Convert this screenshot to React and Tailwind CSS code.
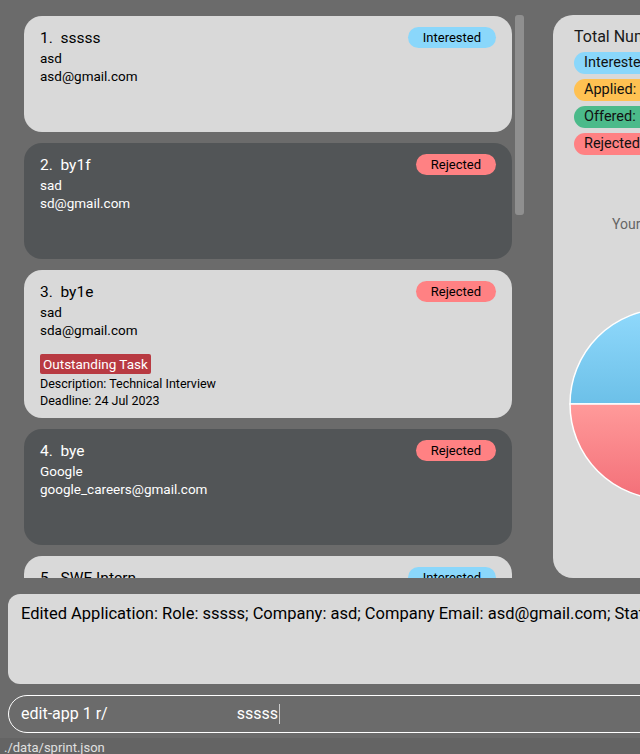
import React from "react";

const apps = [
  { id: 1, role: "sssss", company: "asd", email: "asd@gmail.com", status: "Interested", light: true },
  { id: 2, role: "by1f", company: "sad", email: "sd@gmail.com", status: "Rejected", light: false },
  {
    id: 3,
    role: "by1e",
    company: "sad",
    email: "sda@gmail.com",
    status: "Rejected",
    light: true,
    task: { desc: "Technical Interview", deadline: "24 Jul 2023" },
  },
  { id: 4, role: "bye", company: "Google", email: "google_careers@gmail.com", status: "Rejected", light: false },
  { id: 5, role: "SWE Intern", company: "", email: "", status: "Interested", light: true },
];

const badgeColor = {
  Interested: "bg-[#8ad7fb]",
  Applied: "bg-[#ffc152]",
  Offered: "bg-[#4bba8a]",
  Rejected: "bg-[#ff8183]",
};

function AppCard({ app }) {
  const text = app.light ? "text-black" : "text-white";
  return (
    <div
      className={`shrink-0 rounded-[18px] pl-4 pr-4 pt-[12px] ${
        app.light ? "bg-[#d9d9d9]" : "bg-[#525557]"
      } ${app.task ? "h-[148px]" : "h-[116px]"} ${text}`}
    >
      <div className="flex items-start justify-between">
        <div className="text-[15.5px] leading-[19px] pt-[1px]">
          {app.id}.&nbsp; {app.role}
        </div>
        <span
          className={`${badgeColor[app.status]} text-black text-[13px] leading-[21px] h-[21px] rounded-full px-[15px] mt-[-1px]`}
        >
          {app.status}
        </span>
      </div>
      <div className="text-[13.5px] leading-[18px] mt-[1px]">{app.company}</div>
      <div className="text-[13.5px] leading-[18px]">{app.email}</div>
      {app.task && (
        <div className="mt-[15px] text-[12.5px] leading-[17px]">
          <span className="inline-block bg-[#b83a42] text-white text-[13.5px] leading-[20px] px-[3px] rounded-[2px]">
            Outstanding Task
          </span>
          <div className="mt-[1px]">Description: {app.task.desc}</div>
          <div>Deadline: {app.task.deadline}</div>
        </div>
      )}
    </div>
  );
}

function StatsPanel() {
  const statuses = ["Interested", "Applied", "Offered", "Rejected"];
  return (
    <div className="ml-[29px] w-[300px] h-[563px] shrink-0 bg-[#d9d9d9] rounded-[20px] pt-[12px] pl-[21px] overflow-hidden">
      <div className="text-[16px] leading-[20px] text-[#1a1a1a] whitespace-nowrap">
        Total Number of Applications
      </div>
      <div className="flex flex-col gap-[5px] mt-[5px]">
        {statuses.map((s) => (
          <span
            key={s}
            className={`${badgeColor[s]} self-start rounded-full h-[22px] leading-[22px] text-[14.5px] text-[#111] px-[10px] whitespace-nowrap`}
          >
            {s}: 1
          </span>
        ))}
      </div>
      <div className="mt-[59px] ml-[38px] text-[14px] text-[#666] whitespace-nowrap">
        Your Applications
      </div>
      <svg width="220" height="196" className="mt-[72px] ml-[-6px]" viewBox="0 0 220 196">
        <defs>
          <linearGradient id="blue" x1="0" y1="0" x2="0" y2="1">
            <stop offset="0" stopColor="#90d9fc" />
            <stop offset="1" stopColor="#6cc0e8" />
          </linearGradient>
          <linearGradient id="red" x1="0" y1="0" x2="0" y2="1">
            <stop offset="0" stopColor="#ff9a9a" />
            <stop offset="1" stopColor="#f36f78" />
          </linearGradient>
        </defs>
        <path d="M 2 97 A 95 95 0 0 1 192 97 Z" fill="url(#blue)" stroke="#fff" strokeWidth="1.5" />
        <path d="M 2 97 A 95 95 0 0 0 192 97 Z" fill="url(#red)" stroke="#fff" strokeWidth="1.5" />
      </svg>
    </div>
  );
}

export default function App() {
  return (
    <div
      className="w-[640px] h-[754px] overflow-hidden bg-[#6b6b6b] flex flex-col"
      style={{ fontFamily: "Roboto, 'Liberation Sans', sans-serif" }}
    >
      {/* top: list + stats */}
      <div className="flex h-[578px] shrink-0 pt-[15px]">
        <div className="w-[512px] shrink-0 pl-[24px] pt-[1px] overflow-hidden flex flex-col gap-[11px]">
          {apps.map((a) => (
            <AppCard key={a.id} app={a} />
          ))}
        </div>
        <div className="ml-[3px] w-[9px] h-[200px] bg-[#8f8f8f] rounded-[3px] shrink-0" />
        <StatsPanel />
      </div>

      {/* result box */}
      <div className="mt-[16px] ml-[8px] w-[720px] h-[90px] shrink-0 bg-[#d9d9d9] rounded-[12px] px-[13px] pt-[8px] text-[16.5px] text-black whitespace-nowrap">
        Edited Application: Role: sssss; Company: asd; Company Email: asd@gmail.com; Status: Interested
      </div>

      {/* command box */}
      <div className="mt-[11px] ml-[8px] w-[720px] h-[38px] shrink-0 border border-white rounded-[19px] flex items-center pl-[12px] text-[16px] text-white whitespace-pre">
        <span>edit-app 1 r/</span>
        <span className="ml-[129px]">sssss</span>
        <span className="w-[1px] h-[20px] bg-[#ccc] ml-[1px]" />
      </div>

      {/* status bar */}
      <div className="mt-[5px] flex-1 bg-[#646464] pl-[4px] text-[13px] leading-[20px] text-[#e0e0e0] overflow-hidden">
        ./data/sprint.json
      </div>
    </div>
  );
}
